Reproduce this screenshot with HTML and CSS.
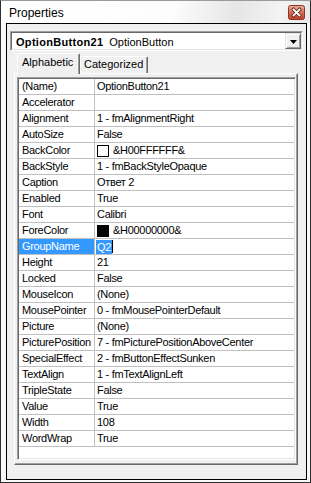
FILE: index.html
```html
<!DOCTYPE html>
<html>
<head>
<meta charset="utf-8">
<link rel="stylesheet" href="styles.css">
</head>
<body>
<div class="window">
  <div class="titlebar">
    <span class="title">Properties</span>
    <svg class="close" width="17" height="15" viewBox="0 0 17 15">
      <defs>
        <linearGradient id="cg" x1="0" y1="0" x2="0" y2="1">
          <stop offset="0" stop-color="#eab0a0"/>
          <stop offset="0.45" stop-color="#d9735a"/>
          <stop offset="1" stop-color="#c2402a"/>
        </linearGradient>
      </defs>
      <rect x="0.5" y="0.5" width="16" height="14" rx="2" fill="url(#cg)" stroke="#8a3626"/>
      <path d="M5.5 4.5 L11.5 10.5 M11.5 4.5 L5.5 10.5" stroke="#5e2418" stroke-width="3.4" stroke-linecap="square"/>
      <path d="M5.5 4.5 L11.5 10.5 M11.5 4.5 L5.5 10.5" stroke="#ffffff" stroke-width="1.8" stroke-linecap="square"/>
    </svg>
  </div>
  <div class="frame">
    <div class="combo">
      <div class="combo-inner">
        <span class="combo-text"><b>OptionButton21</b><span class="combo-type">OptionButton</span></span>
        <span class="drop">
          <svg width="7" height="4" viewBox="0 0 7 4"><polygon points="0,0 7,0 3.5,4" fill="#000"/></svg>
        </span>
      </div>
    </div>
    <div class="tabs">
      <div class="tab active">Alphabetic</div>
      <div class="tab">Categorized</div>
    </div>
    <div class="panel">
      <div class="grid">
        <div class="row"><div class="name">(Name)</div><div class="val">OptionButton21</div></div>
        <div class="row"><div class="name">Accelerator</div><div class="val"></div></div>
        <div class="row"><div class="name">Alignment</div><div class="val">1 - fmAlignmentRight</div></div>
        <div class="row"><div class="name">AutoSize</div><div class="val">False</div></div>
        <div class="row"><div class="name">BackColor</div><div class="val"><span class="swatch white"></span>&amp;H00FFFFFF&amp;</div></div>
        <div class="row"><div class="name">BackStyle</div><div class="val">1 - fmBackStyleOpaque</div></div>
        <div class="row"><div class="name">Caption</div><div class="val">Ответ 2</div></div>
        <div class="row"><div class="name">Enabled</div><div class="val">True</div></div>
        <div class="row"><div class="name">Font</div><div class="val">Calibri</div></div>
        <div class="row"><div class="name">ForeColor</div><div class="val"><span class="swatch black"></span>&amp;H00000000&amp;</div></div>
        <div class="row"><div class="name sel">GroupName</div><div class="val"><span class="seltext">Q2</span><span class="caret"></span></div></div>
        <div class="row"><div class="name">Height</div><div class="val">21</div></div>
        <div class="row"><div class="name">Locked</div><div class="val">False</div></div>
        <div class="row"><div class="name">MouseIcon</div><div class="val">(None)</div></div>
        <div class="row"><div class="name">MousePointer</div><div class="val">0 - fmMousePointerDefault</div></div>
        <div class="row"><div class="name">Picture</div><div class="val">(None)</div></div>
        <div class="row"><div class="name">PicturePosition</div><div class="val">7 - fmPicturePositionAboveCenter</div></div>
        <div class="row"><div class="name">SpecialEffect</div><div class="val">2 - fmButtonEffectSunken</div></div>
        <div class="row"><div class="name">TextAlign</div><div class="val">1 - fmTextAlignLeft</div></div>
        <div class="row"><div class="name">TripleState</div><div class="val">False</div></div>
        <div class="row"><div class="name">Value</div><div class="val">True</div></div>
        <div class="row"><div class="name">Width</div><div class="val">108</div></div>
        <div class="row"><div class="name">WordWrap</div><div class="val">True</div></div>
      </div>
    </div>
  </div>
</div>
</body>
</html>
```
FILE: styles.css
```css
html, body {
  margin: 0;
  padding: 0;
  background: #ffffff;
}

body {
  font-family: "Liberation Sans", Arial, sans-serif;
  font-size: 11px;
  color: #000;
}

.window {
  width: 311px;
  height: 483px;
  box-sizing: border-box;
  border: 1px solid #2e2e2e;
  border-top-color: #9a9a9a;
  background: #f8f8f8;
  display: flex;
  flex-direction: column;
}

.titlebar {
  height: 22px;
  flex: none;
  display: flex;
  justify-content: space-between;
  align-items: flex-start;
  padding: 0 5px 0 8px;
  background: linear-gradient(100deg, #ffffff 0%, #fdfdfd 55%, #e6e6e6 76%, #f3f3f3 90%, #e8e8e8 100%);
}

.title {
  font-size: 12px;
  line-height: 24px;
  height: 22px;
  overflow: visible;
}

.close {
  display: block;
  margin-top: 4px;
}

.frame {
  flex: 1;
  margin: 0 3px 2px 5px;
  border: 1px solid #000;
  background: #f0f0f0;
  padding: 7px 3px 7px 3px;
  display: flex;
  flex-direction: column;
  min-height: 0;
}

.combo {
  height: 20px;
  flex: none;
  box-sizing: border-box;
  border: 1px solid;
  border-color: #a0a0a0 #ffffff #ffffff #a0a0a0;
}

.combo-inner {
  height: 100%;
  box-sizing: border-box;
  border: 1px solid;
  border-color: #696969 #e3e3e3 #e3e3e3 #696969;
  background: #fff;
  display: flex;
  justify-content: space-between;
}

.combo-text {
  padding: 2px 0 0 4px;
  line-height: 14px;
  white-space: nowrap;
}

.combo-text b {
  letter-spacing: 0.3px;
}

.combo-type {
  margin-left: 6px;
}

.drop {
  width: 16px;
  height: 16px;
  box-sizing: border-box;
  border: 1px solid;
  border-color: #e3e3e3 #696969 #696969 #e3e3e3;
  box-shadow: inset 1px 1px 0 #ffffff, inset -1px -1px 0 #a0a0a0;
  background: #f0f0f0;
  display: flex;
  align-items: center;
  justify-content: center;
  padding-top: 1px;
}

.drop svg {
  display: block;
}

.tabs {
  height: 20px;
  flex: none;
  margin-top: 2px;
  padding-left: 7px;
  display: flex;
  align-items: flex-end;
}

.tab {
  box-sizing: border-box;
  height: 17px;
  width: 68px;
  border-top: 1px solid #fff;
  border-left: 1px solid #fff;
  border-right: 1px solid #696969;
  box-shadow: inset -1px 0 0 #a0a0a0;
  border-radius: 2px 2px 0 0;
  padding: 1px 0 0 3px;
  line-height: 13px;
  background: #f0f0f0;
  white-space: nowrap;
}

.tab.active {
  width: 63px;
  height: 21px;
  margin-bottom: -1px;
  padding: 2px 0 0 4px;
  position: relative;
  z-index: 1;
}

.panel {
  flex: 1;
  min-height: 0;
  margin: 0 5px 7px 4px;
  border-top: 1px solid #fff;
  border-left: 1px solid #fff;
  border-right: 1px solid #696969;
  border-bottom: 1px solid #696969;
  box-shadow: inset -1px -1px 0 #a0a0a0;
  padding: 3px 1px 4px 2px;
  display: flex;
  flex-direction: column;
}

.grid {
  flex: 1;
  background: #fff;
  border: 1px solid;
  border-color: #a0a0a0 #ffffff #ffffff #a0a0a0;
  box-shadow: inset 1px 1px 0 #696969, inset -1px -1px 0 #e3e3e3;
  padding: 1px;
}

.row {
  display: flex;
  height: 16px;
  box-sizing: border-box;
  border-bottom: 1px solid #c0c0c0;
  line-height: 15px;
  white-space: nowrap;
  letter-spacing: -0.3px;
}

.name {
  width: 76px;
  flex: none;
  box-sizing: border-box;
  border-right: 1px solid #c0c0c0;
  padding-left: 3px;
  overflow: hidden;
}

.name.sel {
  background: #3399ff;
  color: #fff;
}

.val {
  flex: 1;
  padding-left: 2px;
  display: flex;
  align-items: center;
  overflow: hidden;
}

.swatch {
  width: 12px;
  height: 12px;
  box-sizing: border-box;
  border: 1px solid #000;
  margin-right: 4px;
  flex: none;
}

.swatch.white { background: #fff; }
.swatch.black { background: #000; }

.seltext {
  background: #3399ff;
  color: #fff;
  margin-left: -1px;
  padding: 0 1px;
  line-height: 14px;
}

.caret {
  width: 1px;
  height: 13px;
  background: #000;
}
```
